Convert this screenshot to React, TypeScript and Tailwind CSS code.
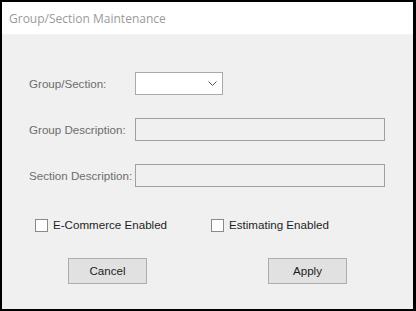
const labelFont = { fontFamily: '"Liberation Sans", Arial, sans-serif' };

function Field({ label, children }: { label: string; children: React.ReactNode }) {
  return (
    <div className="flex items-center h-[23px]">
      <span className="w-[106px] shrink-0 text-[11.6px] text-[#6d6d6d] whitespace-nowrap">{label}</span>
      {children}
    </div>
  );
}

function Check({ label, width }: { label: string; width: string }) {
  return (
    <label className={`flex items-center ${width}`}>
      <span className="w-[13px] h-[13px] bg-white border border-[#8a8a8a] shrink-0" />
      <span className="ml-[5px] text-[11.6px] text-[#1e1e1e]">{label}</span>
    </label>
  );
}

function Button({ label }: { label: string }) {
  return (
    <button className="w-[79px] h-[26px] bg-[#e1e1e1] border border-[#adadad] text-[11.6px] text-[#1e1e1e]">
      {label}
    </button>
  );
}

export default function App() {
  return (
    <div
      className="w-[416px] h-[311px] bg-black border-t-2 border-l-2 border-r-[3px] border-b-2 border-black flex flex-col"
      style={labelFont}
    >
      <div className="h-[33px] bg-white flex items-center pl-[7px] pt-[2px] shrink-0 border-b border-[#f4f4f4]">
        <span className="text-[12px] text-[#9a9a9a]" style={{ fontFamily: '"Open Sans", "Noto Sans", sans-serif' }}>
          Group/Section Maintenance
        </span>
      </div>
      <div className="flex-1 bg-[#f0f0f0] pl-[27px] pt-[37px]">
        <div className="flex flex-col gap-[23px]">
          <Field label="Group/Section:">
            <div className="w-[88px] h-[23px] bg-white border border-[#a9a9a9] flex items-center justify-end pr-[5px]">
              <svg width="9" height="5" viewBox="0 0 9 5">
                <path d="M0.5 0.5 L4.5 4.5 L8.5 0.5" fill="none" stroke="#5a5a5a" strokeWidth="1" />
              </svg>
            </div>
          </Field>
          <Field label="Group Description:">
            <div className="w-[250px] h-[23px] bg-[#f0f0f0] border border-[#a0a0a0]" />
          </Field>
          <Field label="Section Description:">
            <div className="w-[250px] h-[23px] bg-[#f0f0f0] border border-[#a0a0a0]" />
          </Field>
        </div>
        <div className="flex mt-[30px] pl-[6px] h-[16px] items-center">
          <Check label="E-Commerce Enabled" width="w-[176px]" />
          <Check label="Estimating Enabled" width="w-[150px]" />
        </div>
        <div className="flex mt-[25px] pl-[39px] gap-[121px]">
          <Button label="Cancel" />
          <Button label="Apply" />
        </div>
      </div>
    </div>
  );
}
